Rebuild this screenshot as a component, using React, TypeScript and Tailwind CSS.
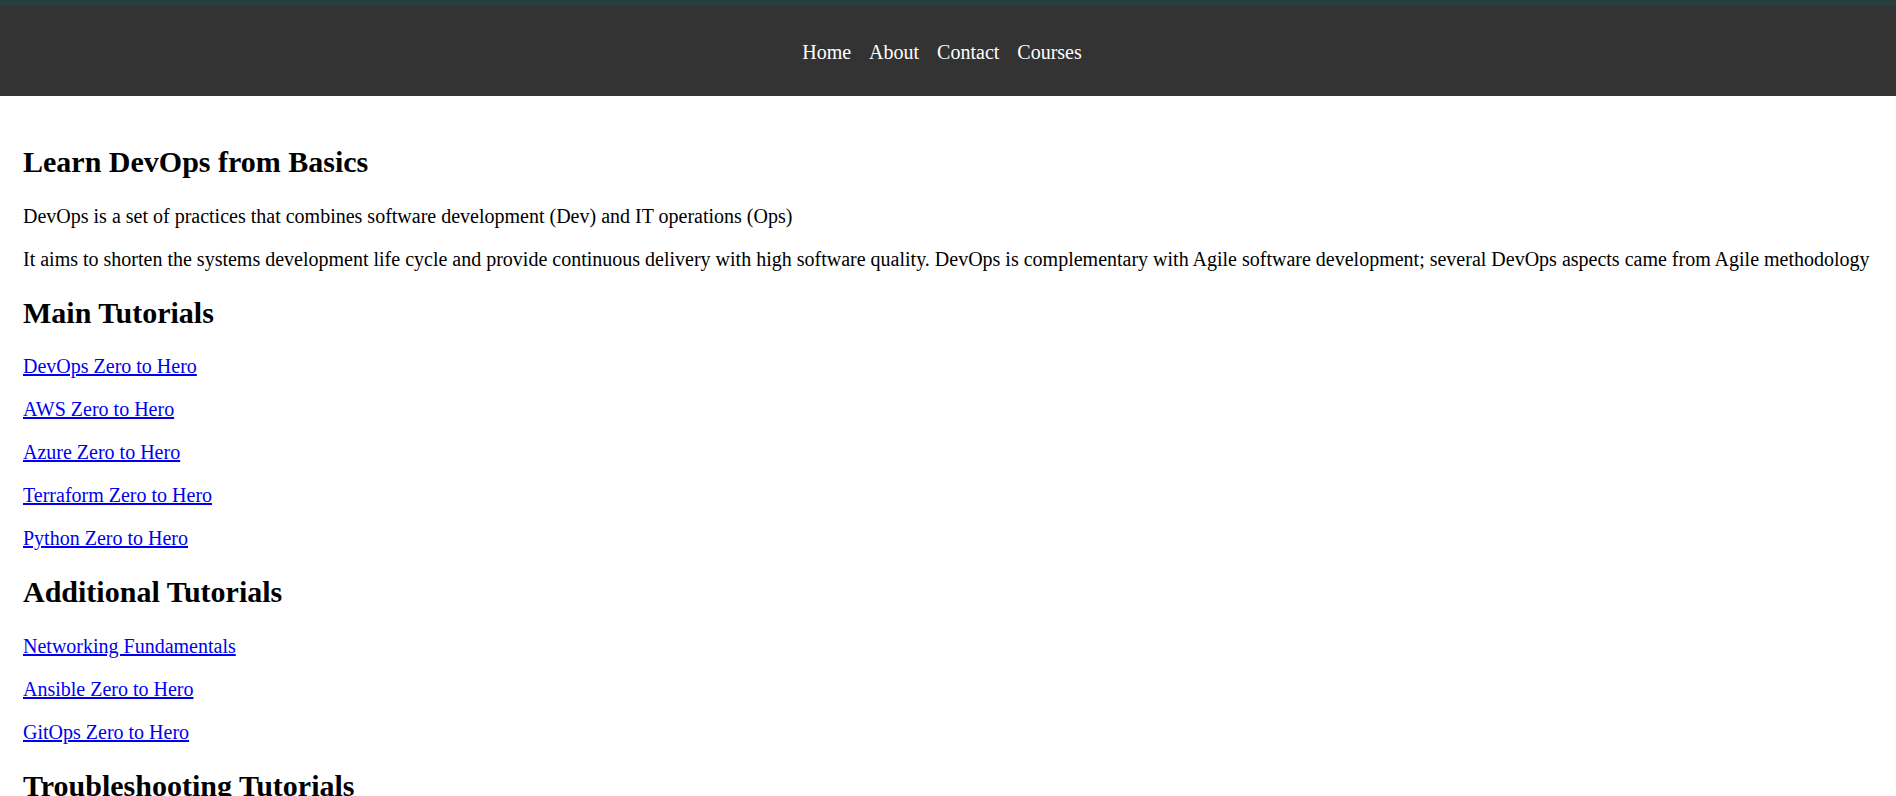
const mainTutorials = [
  'DevOps Zero to Hero',
  'AWS Zero to Hero',
  'Azure Zero to Hero',
  'Terraform Zero to Hero',
  'Python Zero to Hero',
]

const additionalTutorials = ['Networking Fundamentals', 'Ansible Zero to Hero', 'GitOps Zero to Hero']

const troubleshootingTutorials = ['Kubernetes Troubleshooting', 'Docker Troubleshooting']

function Section({ title, links }: { title: string; links: string[] }) {
  return (
    <section>
      <h2 className="text-[30px] font-bold my-[25px]">{title}</h2>
      {links.map((link) => (
        <p key={link} className="my-[20px]">
          <a href="#" className="text-[#0000ee] underline">
            {link}
          </a>
        </p>
      ))}
    </section>
  )
}

export default function App() {
  return (
    <div className="min-h-screen bg-white text-black font-['Liberation_Serif','Times_New_Roman',serif] text-[20px] leading-[1.15]">
      {/* Header */}
      <header className="bg-[#333333] border-t-[6px] border-[#263f3d] h-[96px] flex items-center justify-center">
        <nav className="pt-[2px]">
          <ul className="flex gap-[18px] pr-[12px] text-white">
            <li><a href="#">Home</a></li>
            <li><a href="#">About</a></li>
            <li><a href="#">Contact</a></li>
            <li><a href="#">Courses</a></li>
          </ul>
        </nav>
      </header>

      {/* Main content */}
      <main className="px-[23px] pt-[24px] pb-[24px] flow-root">
        <h2 className="text-[30px] font-bold my-[25px]">Learn DevOps from Basics</h2>
        <p className="my-[20px]">
          DevOps is a set of practices that combines software development (Dev) and IT operations (Ops)
        </p>
        <p className="my-[20px]">
          It aims to shorten the systems development life cycle and provide continuous delivery with high software
          quality. DevOps is complementary with Agile software development; several DevOps aspects came from Agile
          methodology
        </p>

        <Section title="Main Tutorials" links={mainTutorials} />
        <Section title="Additional Tutorials" links={additionalTutorials} />
        <Section title="Troubleshooting Tutorials" links={troubleshootingTutorials} />
      </main>
    </div>
  )
}
